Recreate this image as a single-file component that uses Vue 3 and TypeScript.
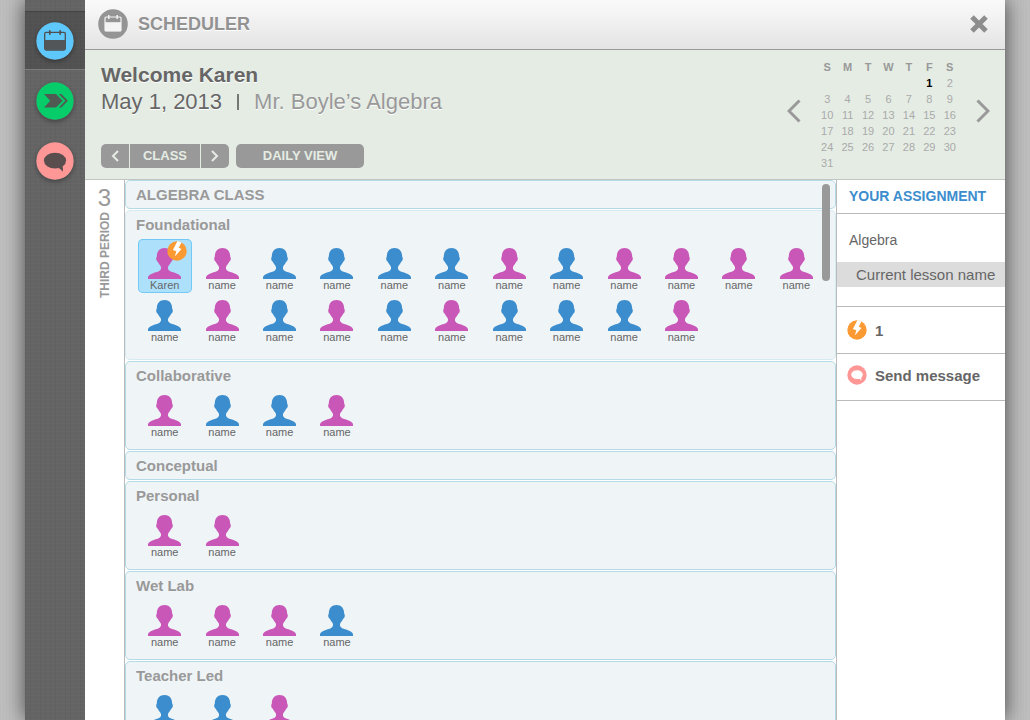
<script setup lang="ts">
import { ref } from 'vue'

type Tone = 'p' | 'b'
interface Group {
  title: string
  tones: Tone[]
  roomy?: boolean
}

const tones = (s: string): Tone[] => s.split('') as Tone[]

const groups: Group[] = [
  { title: 'Foundational', tones: tones('ppbbbbpbppppbpbpbpbbbp'), roomy: true },
  { title: 'Collaborative', tones: tones('pbbp') },
  { title: 'Conceptual', tones: [] },
  { title: 'Personal', tones: tones('pp') },
  { title: 'Wet Lab', tones: tones('pppb') },
  { title: 'Teacher Led', tones: tones('bbp') },
]

const weekdays = ['S', 'M', 'T', 'W', 'T', 'F', 'S']
const firstWeekday = 5
const weeks: (number | null)[][] = Array.from({ length: 6 }, (_, w) =>
  Array.from({ length: 7 }, (_, d) => {
    const day = w * 7 + d - firstWeekday + 1
    return day >= 1 && day <= 31 ? day : null
  }),
)

const today = 1
const selected = ref('0-0')
const studentName = (g: number, s: number) => (g === 0 && s === 0 ? 'Karen' : 'name')
</script>

<template>
  <div class="page">
    <div class="window">
      <nav class="rail" aria-label="Sections">
        <button class="rail-item active" type="button" aria-label="Scheduler">
          <svg class="rail-icon" viewBox="0 0 38 38">
            <circle cx="19" cy="19" r="18.7" fill="#5ec7fb" />
            <rect x="8.7" y="10.4" width="20.6" height="17.6" rx="1.4" fill="none" stroke="#4f4f4f" stroke-width="1.3" />
            <rect x="9" y="18" width="20" height="9.8" fill="#525659" />
            <path d="M13.8 8.2v4.6M24.2 8.2v4.6" stroke="#4f4f4f" stroke-width="1.7" />
          </svg>
        </button>
        <button class="rail-item" type="button" aria-label="Lessons">
          <svg class="rail-icon" viewBox="0 0 38 38">
            <circle cx="19" cy="19" r="18.7" fill="#06cc69" />
            <path d="M8 12h12l6.600 6.700-6.600 6.700H8l6.200-6.700z" fill="#4f5a52" />
            <path d="M22.800 12h2.600l6.500 6.700-6.500 6.700h-2.600l6.500-6.700z" fill="#4f5a52" />
          </svg>
        </button>
        <button class="rail-item" type="button" aria-label="Messages">
          <svg class="rail-icon" viewBox="0 0 38 38">
            <circle cx="19" cy="19" r="18.7" fill="#ff9797" />
            <ellipse cx="19" cy="18.6" rx="11.100" ry="7.900" fill="#594d4d" />
            <path d="M20.500 25.500c2.600.4 4.600 1.800 6.300 4.300.3-2.400.2-4.400-.6-6.600z" fill="#594d4d" />
          </svg>
        </button>
      </nav>

      <div class="main">
        <header class="titlebar">
          <svg class="title-icon" viewBox="0 0 30 30" aria-hidden="true">
            <circle cx="15" cy="15" r="14.800" fill="#949494" />
            <rect x="7" y="8" width="16" height="14" rx="1" fill="none" stroke="#f4f4f4" stroke-width="1.200" />
            <rect x="7" y="13.200" width="16" height="9" fill="#f4f4f4" />
            <path d="M10.800 6v4M19.200 6v4" stroke="#f4f4f4" stroke-width="1.400" />
          </svg>
          <h1>SCHEDULER</h1>
          <button class="close" type="button" aria-label="Close">
            <svg viewBox="0 0 20 20"><path d="M3 3l14 14M17 3L3 17" stroke="#8d8d8d" stroke-width="5" /></svg>
          </button>
        </header>

        <section class="banner">
          <div class="intro">
            <h2>Welcome Karen</h2>
            <p class="date">May 1, 2013<span class="bar"></span><span class="course">Mr. Boyle’s Algebra</span></p>
            <div class="controls">
              <div class="stepper">
                <button type="button" aria-label="Previous class">
                  <svg viewBox="0 0 8 12"><path d="M7 1L2 6l5 5" /></svg>
                </button>
                <button class="wide" type="button">CLASS</button>
                <button type="button" aria-label="Next class">
                  <svg viewBox="0 0 8 12"><path d="M1 1l5 5-5 5" /></svg>
                </button>
              </div>
              <button class="daily" type="button">DAILY VIEW</button>
            </div>
          </div>
          <div class="calendar">
            <button class="month" type="button" aria-label="Previous month">
              <svg viewBox="0 0 14 24"><path d="M12.500 1.500L2 12l10.500 10.500" /></svg>
            </button>
            <table>
              <thead>
                <tr><th v-for="(d, i) in weekdays" :key="i" scope="col">{{ d }}</th></tr>
              </thead>
              <tbody>
                <tr v-for="(week, w) in weeks" :key="w">
                  <td v-for="(day, d) in week" :key="d" :class="{ today: day === today }">{{ day }}</td>
                </tr>
              </tbody>
            </table>
            <button class="month" type="button" aria-label="Next month">
              <svg viewBox="0 0 14 24"><path d="M1.500 1.500L12 12 1.500 22.500" /></svg>
            </button>
          </div>
        </section>

        <div class="body">
          <div class="period">
            <span class="number">3</span>
            <span class="label">THIRD PERIOD</span>
          </div>

          <main class="roster">
            <div class="list">
              <h3 class="group class-name">ALGEBRA CLASS</h3>
              <section v-for="(group, g) in groups" :key="group.title" class="group" :class="{ roomy: group.roomy }">
                <h4>{{ group.title }}</h4>
                <div v-if="group.tones.length" class="students">
                  <button
                    v-for="(tone, s) in group.tones"
                    :key="s"
                    type="button"
                    class="student"
                    :class="{ selected: selected === `${g}-${s}` }"
                    @click="selected = `${g}-${s}`"
                  >
                    <svg class="person" :class="tone" viewBox="0 0 33 31" aria-hidden="true">
                      <path d="M0 31V29.500C0 27.500 2 26.500 4.500 25.500 8 24.200 10 23.800 11.500 22.800 13 21.800 13.400 20 12.800 18.600 12.200 17 10.800 16.200 9.800 13.800 8.800 13.400 8.200 12 8.200 10.300 8.200 9.600 8.400 9.200 8.800 8.800 8.800 3.200 11.800 0 16.500 0S24.200 3.200 24.200 8.800C24.600 9.200 24.800 9.600 24.800 10.300 24.800 12 24.200 13.400 23.200 13.800 22.200 16.200 20.800 17 20.200 18.600 19.600 20 20 21.800 21.500 22.800 23 23.800 25 24.200 28.500 25.500 31 26.500 33 27.500 33 29.500V31z" />
                    </svg>
                    <svg v-if="g === 0 && s === 0" class="badge" viewBox="0 0 20 20" aria-hidden="true">
                      <circle cx="10" cy="10" r="9.700" fill="#fb9932" />
                      <path d="M10.500 0L14.500 1.500 11.700 6.800l2.800 1.100-6.700 7.700 1.500-5.300-3.400-1.200z" fill="#fff" />
                    </svg>
                    <span>{{ studentName(g, s) }}</span>
                  </button>
                </div>
              </section>
            </div>
            <div class="thumb"></div>
          </main>

          <aside class="assignment">
            <h3>YOUR ASSIGNMENT</h3>
            <div class="lesson">
              <p class="subject">Algebra</p>
              <a class="current" href="#lesson">Current lesson name</a>
            </div>
            <div class="row">
              <svg viewBox="0 0 20 20" aria-hidden="true">
                <circle cx="10" cy="10" r="9.700" fill="#fb9932" />
                <path d="M10.500 0L14.500 1.500 11.700 6.800l2.800 1.100-6.700 7.700 1.500-5.300-3.400-1.200z" fill="#fff" />
              </svg>
              <span>1</span>
            </div>
            <button class="row message" type="button">
              <svg viewBox="0 0 20 20" aria-hidden="true">
                <circle cx="10" cy="10" r="9.700" fill="#ff9797" />
                <ellipse cx="10" cy="9.600" rx="5.800" ry="4.300" fill="#fff" />
                <path d="M11 13.200c1.400.2 2.400 1 3.200 2.200.300-1.300.200-2.300-.200-3.600z" fill="#fff" />
              </svg>
              <span>Send message</span>
            </button>
          </aside>
        </div>
      </div>
    </div>
  </div>
</template>

<style>
html,
body {
  margin: 0;
}
</style>

<style scoped>
* {
  box-sizing: border-box;
}
h1, h2, h3, h4, p {
  margin: 0;
}
button {
  padding: 0;
  border: 0;
  background: none;
  font: inherit;
  color: inherit;
  cursor: pointer;
}
svg {
  display: block;
  flex: none;
}
.page {
  height: 100vh;
  padding: 0 25px;
  overflow: hidden;
  background-color: #bfbfbf;
  background-image: repeating-linear-gradient(90deg, rgba(0, 0, 0, 0.01) 0 1px, transparent 1px 3px);
  font-family: "Liberation Sans", Arial, Helvetica, sans-serif;
  color: #666;
}
.window {
  display: flex;
  height: 100%;
  box-shadow: 0 0 20px rgba(0, 0, 0, 0.65);
}
.rail {
  flex: none;
  width: 60px;
  padding-top: 11px;
  background-color: #646464;
  background-image:
    repeating-linear-gradient(90deg, rgba(0, 0, 0, 0.03) 0 1px, transparent 1px 5px),
    repeating-linear-gradient(0deg, rgba(255, 255, 255, 0.02) 0 1px, transparent 1px 4px);
}
.rail-item {
  display: flex;
  align-items: center;
  justify-content: center;
  width: 100%;
  height: 60px;
}
.rail-item.active {
  height: 59px;
  margin-bottom: 1px;
  border-top: 1px solid #444;
  border-bottom: 1px solid #7d7d7d;
  background: rgba(0, 0, 0, 0.18);
}
.rail-icon {
  width: 38px;
  height: 38px;
  border-radius: 50%;
  box-shadow: 0 2px 4px rgba(0, 0, 0, 0.3);
}
.main {
  display: flex;
  flex: 1;
  flex-direction: column;
  min-width: 0;
  background: #fff;
}
.titlebar {
  display: flex;
  flex: none;
  align-items: center;
  height: 50px;
  padding: 0 16px 2px 13px;
  border-bottom: 1px solid #999;
  background: linear-gradient(#fafafa, #e4e4e4);
}
.title-icon {
  width: 30px;
  height: 30px;
}
h1 {
  flex: 1;
  margin-left: 10px;
  font-size: 18px;
  line-height: 24px;
  color: #929292;
  text-shadow: 0 1px 0 #fff;
}
.close svg {
  width: 20px;
  height: 20px;
}
.banner {
  display: flex;
  flex: none;
  justify-content: space-between;
  height: 130px;
  border-bottom: 1px solid #c2c6c2;
  background: #e5ece4;
}
.intro {
  padding: 12px 0 0 16px;
}
h2 {
  font-size: 21px;
  line-height: 26px;
  text-shadow: 0 1px 0 #fff;
}
.date {
  display: flex;
  align-items: center;
  font-size: 22px;
  line-height: 28px;
  text-shadow: 0 1px 0 #fff;
}
.bar {
  width: 2px;
  height: 16px;
  margin: 0 15px;
  background: #777;
}
.course {
  color: #999;
}
.controls {
  display: flex;
  gap: 7px;
  margin-top: 28px;
  font-size: 13px;
  font-weight: bold;
  line-height: 24px;
  color: #e5ece4;
}
.stepper {
  display: flex;
  gap: 1px;
  overflow: hidden;
  border-radius: 5px;
}
.stepper button {
  display: flex;
  align-items: center;
  justify-content: center;
  width: 28px;
  height: 24px;
  background: #999;
}
.stepper .wide {
  width: 70px;
}
.stepper svg {
  width: 8px;
  height: 12px;
  fill: none;
  stroke: #e5ece4;
  stroke-width: 2;
}
.daily {
  width: 128px;
  height: 24px;
  border-radius: 5px;
  background: #999;
}
.calendar {
  display: flex;
  align-items: flex-start;
  gap: 16px;
  padding: 9px 15px 0 0;
}
.month {
  margin-top: 40px;
}
.month svg {
  width: 14px;
  height: 24px;
  fill: none;
  stroke: #999;
  stroke-width: 3;
}
table {
  width: 143px;
  border-collapse: collapse;
  table-layout: fixed;
  font-size: 11px;
  line-height: 16px;
  text-align: center;
  color: #aaa;
}
th, td {
  height: 16px;
  padding: 0;
}
th {
  color: #999;
}
.today {
  font-weight: bold;
  color: #000;
}
.body {
  display: flex;
  flex: 1;
  min-height: 0;
}
.period {
  display: flex;
  flex: none;
  flex-direction: column;
  align-items: center;
  width: 40px;
  padding-top: 4px;
  border-right: 1px solid #bbb;
  color: #999;
}
.number {
  font-size: 24px;
  line-height: 28px;
}
.label {
  font-size: 12px;
  font-weight: bold;
  line-height: 16px;
  writing-mode: vertical-rl;
  transform: rotate(180deg);
}
.roster {
  position: relative;
  flex: 1;
  min-width: 0;
}
.list {
  display: flex;
  flex-direction: column;
  gap: 1px;
  height: 100%;
  overflow-y: auto;
  scrollbar-width: none;
}
.group {
  flex: none;
  padding: 0 10px;
  border: 1px solid #b3dae6;
  border-radius: 5px;
  background: #eff4f7;
}
.class-name, h4 {
  font-size: 15px;
  line-height: 27px;
  color: #999;
}
.students {
  display: grid;
  grid-template-columns: repeat(12, 1fr);
  padding-bottom: 8px;
}
.roomy {
  border-color: #d6ebf1;
}
.roomy .students {
  padding: 1px 0 16px;
}
.student {
  position: relative;
  display: flex;
  flex-direction: column;
  align-items: center;
  justify-self: center;
  width: 54px;
  height: 52px;
  padding-top: 6px;
  border-radius: 5px;
  font-size: 11px;
  line-height: 12px;
}
.roomy .student {
  padding-top: 9px;
}
.student.selected {
  height: 54px;
  margin-bottom: -2px;
  background: #ade0fb;
  box-shadow: inset 0 0 0 1px #72c9f6;
}
.person {
  width: 33px;
  height: 31px;
}
.person.p {
  fill: #c957b8;
}
.person.b {
  fill: #3c8dcd;
}
.badge {
  position: absolute;
  top: 2px;
  right: 5px;
  width: 20px;
  height: 20px;
}
.thumb {
  position: absolute;
  top: 4px;
  right: 6px;
  width: 8px;
  height: 97px;
  border-radius: 4px;
  background: #999;
}
.assignment {
  flex: none;
  width: 169px;
  border-left: 1px solid #bbb;
}
.assignment h3 {
  padding-left: 12px;
  border-bottom: 1px solid #bbb;
  font-size: 14px;
  line-height: 33px;
  color: #3c8dcd;
}
.lesson {
  padding: 16px 0 19px;
  border-bottom: 1px solid #bbb;
}
.subject {
  padding-left: 12px;
  font-size: 14px;
  line-height: 20px;
}
.current {
  display: block;
  margin-top: 12px;
  padding-left: 19px;
  background: #dcdcdc;
  font-size: 15px;
  line-height: 25px;
  white-space: nowrap;
  color: inherit;
  text-decoration: none;
}
.row {
  display: flex;
  align-items: center;
  gap: 8px;
  width: 100%;
  height: 47px;
  padding-left: 10px;
  border-bottom: 1px solid #bbb;
  font-size: 15px;
  font-weight: bold;
}
.row.message {
  padding-bottom: 4px;
}
.row svg {
  width: 20px;
  height: 20px;
}
</style>
